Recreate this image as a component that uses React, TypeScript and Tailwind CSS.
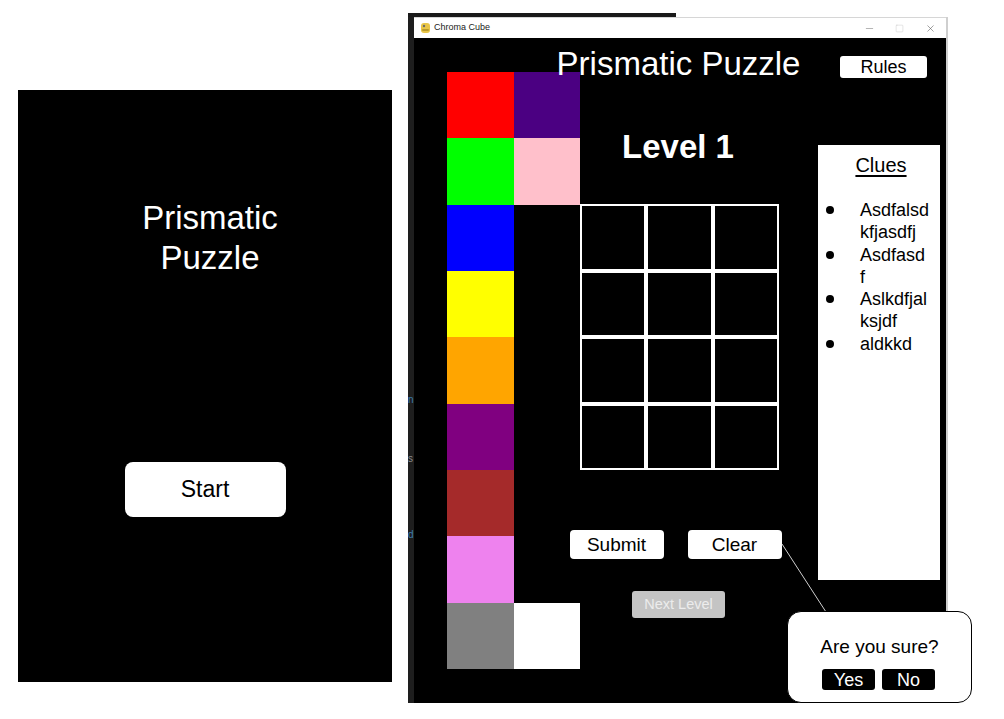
import { Minus, Square, X } from "lucide-react";

const palette: (string | null)[][] = [
  ["bg-[#ff0000]", "bg-[#4b0082]"],
  ["bg-[#00ff00]", "bg-[#ffc0cb]"],
  ["bg-[#0000ff]", null],
  ["bg-[#ffff00]", null],
  ["bg-[#ffa500]", null],
  ["bg-[#800080]", null],
  ["bg-[#a52a2a]", null],
  ["bg-[#ee82ee]", null],
  ["bg-[#808080]", "bg-[#ffffff]"],
];

const clues = [["Asdfalsd", "kfjasdfj"], ["Asdfasd", "f"], ["Aslkdfjal", "ksjdf"], ["aldkkd"]];

function StartScreen() {
  return (
    <div className="absolute left-[18px] top-[90px] w-[374px] h-[592px] bg-black flex flex-col items-center">
      <h1 className="ml-[10px] mt-[108px] text-white text-[33px] leading-[40px] text-center">
        Prismatic
        <br />
        Puzzle
      </h1>
      <button className="mt-[184px] w-[161px] h-[55px] rounded-[8px] bg-white text-black text-[23px]">
        Start
      </button>
    </div>
  );
}

function TitleBar() {
  return (
    <div className="h-[21px] bg-white flex items-center border-t border-[#d6d6d6]">
      {/* pygame-ish icon */}
      <svg width="11" height="12" viewBox="0 0 11 12" className="ml-[6px]">
        <rect x="1" y="1" width="9" height="10" rx="3" fill="#e8c547" />
        <circle cx="4" cy="4" r="1.2" fill="#6b6b6b" />
        <rect x="2" y="7" width="7" height="2" rx="1" fill="#b99a2a" />
      </svg>
      <span className="ml-[3px] text-[9px] text-[#222]">Chroma Cube</span>
      <div className="ml-auto flex h-full">
        <div className="w-[29px] flex items-center justify-center text-[#777]">
          <Minus size={11} strokeWidth={1.2} />
        </div>
        <div className="w-[31px] flex items-center justify-center text-[#c8c8c8]">
          <Square size={9} strokeWidth={1.2} />
        </div>
        <div className="w-[31px] flex items-center justify-center text-[#555]">
          <X size={11} strokeWidth={1.2} />
        </div>
      </div>
    </div>
  );
}

function Palette() {
  return (
    <div className="mt-[34px] ml-[33px] grid grid-cols-2 w-[133px]">
      {palette.flat().map((c, i) => (
        <div key={i} className={`h-[66.33px] ${c ?? ""}`} />
      ))}
    </div>
  );
}

function Board() {
  return (
    <div className="w-[199px] flex flex-col items-center pt-[9px]">
      <h1 className="mr-[2px] whitespace-nowrap text-white text-[33px] leading-none">Prismatic Puzzle</h1>
      <h2 className="mr-[3px] mt-[50px] whitespace-nowrap text-white text-[33px] font-bold leading-none">Level 1</h2>
      <div className="mt-[41px] grid grid-cols-3 w-[199px]">
        {Array.from({ length: 12 }).map((_, i) => (
          <div key={i} className="h-[66.5px] border-2 border-white" />
        ))}
      </div>
      <div className="mr-[8px] mt-[60px] flex gap-[24px] whitespace-nowrap">
        <button className="w-[94px] h-[29px] rounded-[4px] bg-white text-black text-[19px] leading-none">
          Submit
        </button>
        <button className="w-[94px] h-[29px] rounded-[4px] bg-white text-black text-[19px] leading-none">
          Clear
        </button>
      </div>
      <button className="mr-[2px] mt-[32px] w-[93px] h-[27px] rounded-[3px] bg-[#c4c4c4] text-[#ececec] text-[14.5px] leading-none">
        Next Level
      </button>
    </div>
  );
}

function Clues() {
  return (
    <div className="ml-[39px] w-[122px] flex flex-col">
      <button className="ml-[22px] mt-[18px] w-[87px] h-[22px] rounded-[3px] bg-white text-black text-[18px] leading-none">
        Rules
      </button>
      <div className="mt-[67px] h-[435px] bg-white pt-[10px] flex flex-col">
        <h3 className="ml-[4px] text-center text-[20px] leading-none underline underline-offset-[3px]">Clues</h3>
        <ul className="mt-[24px] pl-[8px] flex flex-col">
          {clues.map((lines, i) => (
            <li key={i} className="flex text-[18px] leading-[22.3px]">
              <div className="w-[8px] h-[22.3px] flex items-center shrink-0">
                <div className="w-[8px] h-[8px] rounded-full bg-black" />
              </div>
              <div className="ml-[26px]">
                {lines.map((l) => (
                  <div key={l}>{l}</div>
                ))}
              </div>
            </li>
          ))}
        </ul>
      </div>
    </div>
  );
}

function GameWindow() {
  return (
    <div className="absolute left-[408px] top-[17px] w-[540px] h-[686px] flex">
      <div className="relative w-[6px] bg-[#1e1e1e] overflow-hidden text-[10px] leading-none">
        <span className="absolute left-0 top-[378px] text-[#3d7fb0]">n</span>
        <span className="absolute left-0 top-[437px] text-[#8a8a8a]">s</span>
        <span className="absolute left-0 top-[513px] text-[#3d7fb0]">d</span>
      </div>
      <div className="flex-1 flex flex-col">
        <TitleBar />
        <div className="flex-1 bg-black flex items-start">
          <Palette />
          <Board />
          <Clues />
        </div>
      </div>
      <div className="w-[2px] bg-[#cfcfcf]" />
    </div>
  );
}

function ConfirmPopup() {
  return (
    <>
      <svg className="absolute left-0 top-0 pointer-events-none" width="1004" height="719">
        <line x1="782" y1="544" x2="826" y2="612" stroke="#cfcfcf" strokeWidth="1" />
      </svg>
      <div className="absolute left-[787px] top-[611px] w-[185px] h-[92px] rounded-[14px] border border-black bg-white flex flex-col items-center pt-[25px]">
        <p className="text-[19px] leading-none text-black">Are you sure?</p>
        <div className="mr-[2px] mt-[13px] flex gap-[7px]">
          <button className="w-[53px] h-[21px] rounded-[3px] bg-black text-white text-[18px] leading-none">Yes</button>
          <button className="w-[53px] h-[21px] rounded-[3px] bg-black text-white text-[18px] leading-none">No</button>
        </div>
      </div>
    </>
  );
}

export default function App() {
  return (
    <div className="relative w-[1004px] h-[719px] bg-white overflow-hidden font-['Liberation_Sans',Arial,sans-serif]">
      <StartScreen />
      <div className="absolute left-[408px] top-[13px] w-[268px] h-[4px] bg-[#1a1a1a]" />
      <GameWindow />
      <ConfirmPopup />
    </div>
  );
}
